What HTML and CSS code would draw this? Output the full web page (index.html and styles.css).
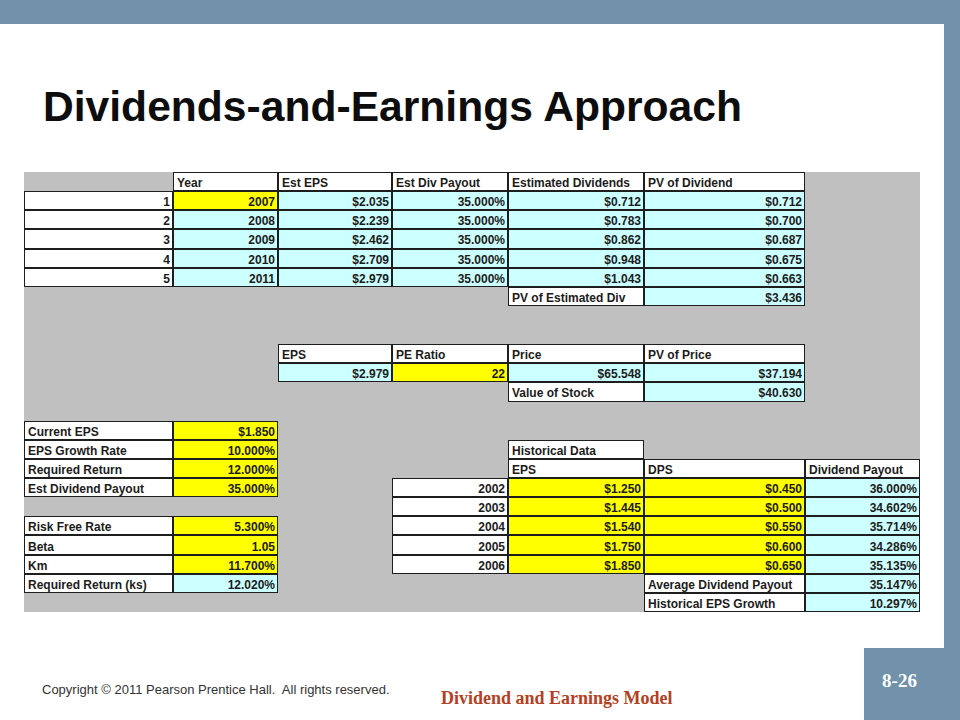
FILE: index.html
```html
<!DOCTYPE html>
<html>
<head>
<meta charset="utf-8">
<link rel="stylesheet" href="styles.css">
</head>
<body>
<div class="slide">
  <div class="topbar"></div>
  <div class="rightbar"></div>
  <div class="main">
    <h1 class="title">Dividends-and-Earnings Approach</h1>
    <div class="sheet">
      <!-- row 0 -->
      <div></div><div class="w">Year</div><div class="w">Est EPS</div><div class="w">Est Div Payout</div><div class="w">Estimated Dividends</div><div class="w">PV of Dividend</div><div></div>
      <!-- rows 1-5 -->
      <div class="w r">1</div><div class="y r">2007</div><div class="c r">$2.035</div><div class="c r">35.000%</div><div class="c r">$0.712</div><div class="c r">$0.712</div><div></div>
      <div class="w r">2</div><div class="c r">2008</div><div class="c r">$2.239</div><div class="c r">35.000%</div><div class="c r">$0.783</div><div class="c r">$0.700</div><div></div>
      <div class="w r">3</div><div class="c r">2009</div><div class="c r">$2.462</div><div class="c r">35.000%</div><div class="c r">$0.862</div><div class="c r">$0.687</div><div></div>
      <div class="w r">4</div><div class="c r">2010</div><div class="c r">$2.709</div><div class="c r">35.000%</div><div class="c r">$0.948</div><div class="c r">$0.675</div><div></div>
      <div class="w r">5</div><div class="c r">2011</div><div class="c r">$2.979</div><div class="c r">35.000%</div><div class="c r">$1.043</div><div class="c r">$0.663</div><div></div>
      <!-- row 6 -->
      <div></div><div></div><div></div><div></div><div class="w">PV of Estimated Div</div><div class="c r">$3.436</div><div></div>
      <!-- rows 7-8 -->
      <div></div><div></div><div></div><div></div><div></div><div></div><div></div>
      <div></div><div></div><div></div><div></div><div></div><div></div><div></div>
      <!-- row 9 -->
      <div></div><div></div><div class="w">EPS</div><div class="w">PE Ratio</div><div class="w">Price</div><div class="w">PV of Price</div><div></div>
      <!-- row 10 -->
      <div></div><div></div><div class="c r">$2.979</div><div class="y r">22</div><div class="c r">$65.548</div><div class="c r">$37.194</div><div></div>
      <!-- row 11 -->
      <div></div><div></div><div></div><div></div><div class="w">Value of Stock</div><div class="c r">$40.630</div><div></div>
      <!-- row 12 -->
      <div></div><div></div><div></div><div></div><div></div><div></div><div></div>
      <!-- row 13 -->
      <div class="w">Current EPS</div><div class="y r">$1.850</div><div></div><div></div><div></div><div></div><div></div>
      <!-- row 14 -->
      <div class="w">EPS Growth Rate</div><div class="y r">10.000%</div><div></div><div></div><div class="w">Historical Data</div><div></div><div></div>
      <!-- row 15 -->
      <div class="w">Required Return</div><div class="y r">12.000%</div><div></div><div></div><div class="w">EPS</div><div class="w">DPS</div><div class="w">Dividend Payout</div>
      <!-- row 16 -->
      <div class="w">Est Dividend Payout</div><div class="y r">35.000%</div><div></div><div class="w r">2002</div><div class="y r">$1.250</div><div class="y r">$0.450</div><div class="c r">36.000%</div>
      <!-- row 17 -->
      <div></div><div></div><div></div><div class="w r">2003</div><div class="y r">$1.445</div><div class="y r">$0.500</div><div class="c r">34.602%</div>
      <!-- row 18 -->
      <div class="w">Risk Free Rate</div><div class="y r">5.300%</div><div></div><div class="w r">2004</div><div class="y r">$1.540</div><div class="y r">$0.550</div><div class="c r">35.714%</div>
      <!-- row 19 -->
      <div class="w">Beta</div><div class="y r">1.05</div><div></div><div class="w r">2005</div><div class="y r">$1.750</div><div class="y r">$0.600</div><div class="c r">34.286%</div>
      <!-- row 20 -->
      <div class="w">Km</div><div class="y r">11.700%</div><div></div><div class="w r">2006</div><div class="y r">$1.850</div><div class="y r">$0.650</div><div class="c r">35.135%</div>
      <!-- row 21 -->
      <div class="w">Required Return (ks)</div><div class="c r">12.020%</div><div></div><div></div><div></div><div class="w">Average Dividend Payout</div><div class="c r">35.147%</div>
      <!-- row 22 -->
      <div></div><div></div><div></div><div></div><div></div><div class="w">Historical EPS Growth</div><div class="c r">10.297%</div>
    </div>
    <div class="footer">
      <p class="copyright">Copyright © 2011 Pearson Prentice Hall.&nbsp; All rights reserved.</p>
      <p class="model">Dividend and Earnings Model</p>
      <div class="pagebox">8-26</div>
    </div>
  </div>
</div>
</body>
</html>
```

FILE: styles.css
```css
html, body {
  margin: 0;
  padding: 0;
  background: #ffffff;
}

.slide {
  width: 960px;
  height: 720px;
  display: grid;
  grid-template-columns: 944px 16px;
  grid-template-rows: 24px 696px;
  overflow: hidden;
}

.topbar {
  grid-column: 1 / 3;
  grid-row: 1;
  background: #7291ab;
}

.rightbar {
  grid-column: 2;
  grid-row: 2;
  background: #7291ab;
}

.main {
  grid-column: 1;
  grid-row: 2;
  display: flex;
  flex-direction: column;
}

.title {
  margin: 61px 0 0 43px;
  height: 87px;
  font-family: "Liberation Sans", Arial, sans-serif;
  font-weight: bold;
  font-size: 42.6px;
  line-height: 42px;
  color: #0d0d0d;
  letter-spacing: 0;
}

.sheet {
  margin-left: 24px;
  width: 896px;
  height: 440px;
  background: #c0c0c0;
  display: grid;
  grid-template-columns: 149px 105px 114px 116px 136px 161px 115px;
  grid-template-rows: repeat(23, 1fr);
  font-family: "Liberation Sans", Arial, sans-serif;
  font-weight: bold;
  font-size: 12px;
  color: #1c1c1c;
}

.sheet > div {
  box-sizing: border-box;
  display: flex;
  align-items: center;
  padding: 3px 3px 0 3px;
  white-space: nowrap;
  overflow: hidden;
}

.sheet .w,
.sheet .y,
.sheet .c {
  border: 1px solid #1e1e1e;
}

.sheet .w { background: #ffffff; }
.sheet .y { background: #ffff00; }
.sheet .c { background: #ccffff; }
.sheet .r { justify-content: flex-end; padding-right: 2px; }

.footer {
  margin-top: 36px;
  height: 72px;
  display: grid;
  grid-template-columns: 399px 1fr 80px;
  padding-left: 42px;
}

.copyright {
  margin: 34px 0 0 0;
  font-family: "Liberation Sans", Arial, sans-serif;
  font-size: 13px;
  line-height: 15px;
  color: #333333;
  white-space: nowrap;
}

.model {
  margin: 40px 0 0 0;
  font-family: "Liberation Serif", "Times New Roman", serif;
  font-weight: bold;
  font-size: 18px;
  line-height: 20px;
  color: #b5401f;
}

.pagebox {
  background: #7291ab;
  color: #ffffff;
  font-family: "Liberation Serif", "Times New Roman", serif;
  font-weight: bold;
  font-size: 19px;
  line-height: 20px;
  text-align: center;
  padding: 23px 9px 0 0;
  box-sizing: border-box;
}
```
